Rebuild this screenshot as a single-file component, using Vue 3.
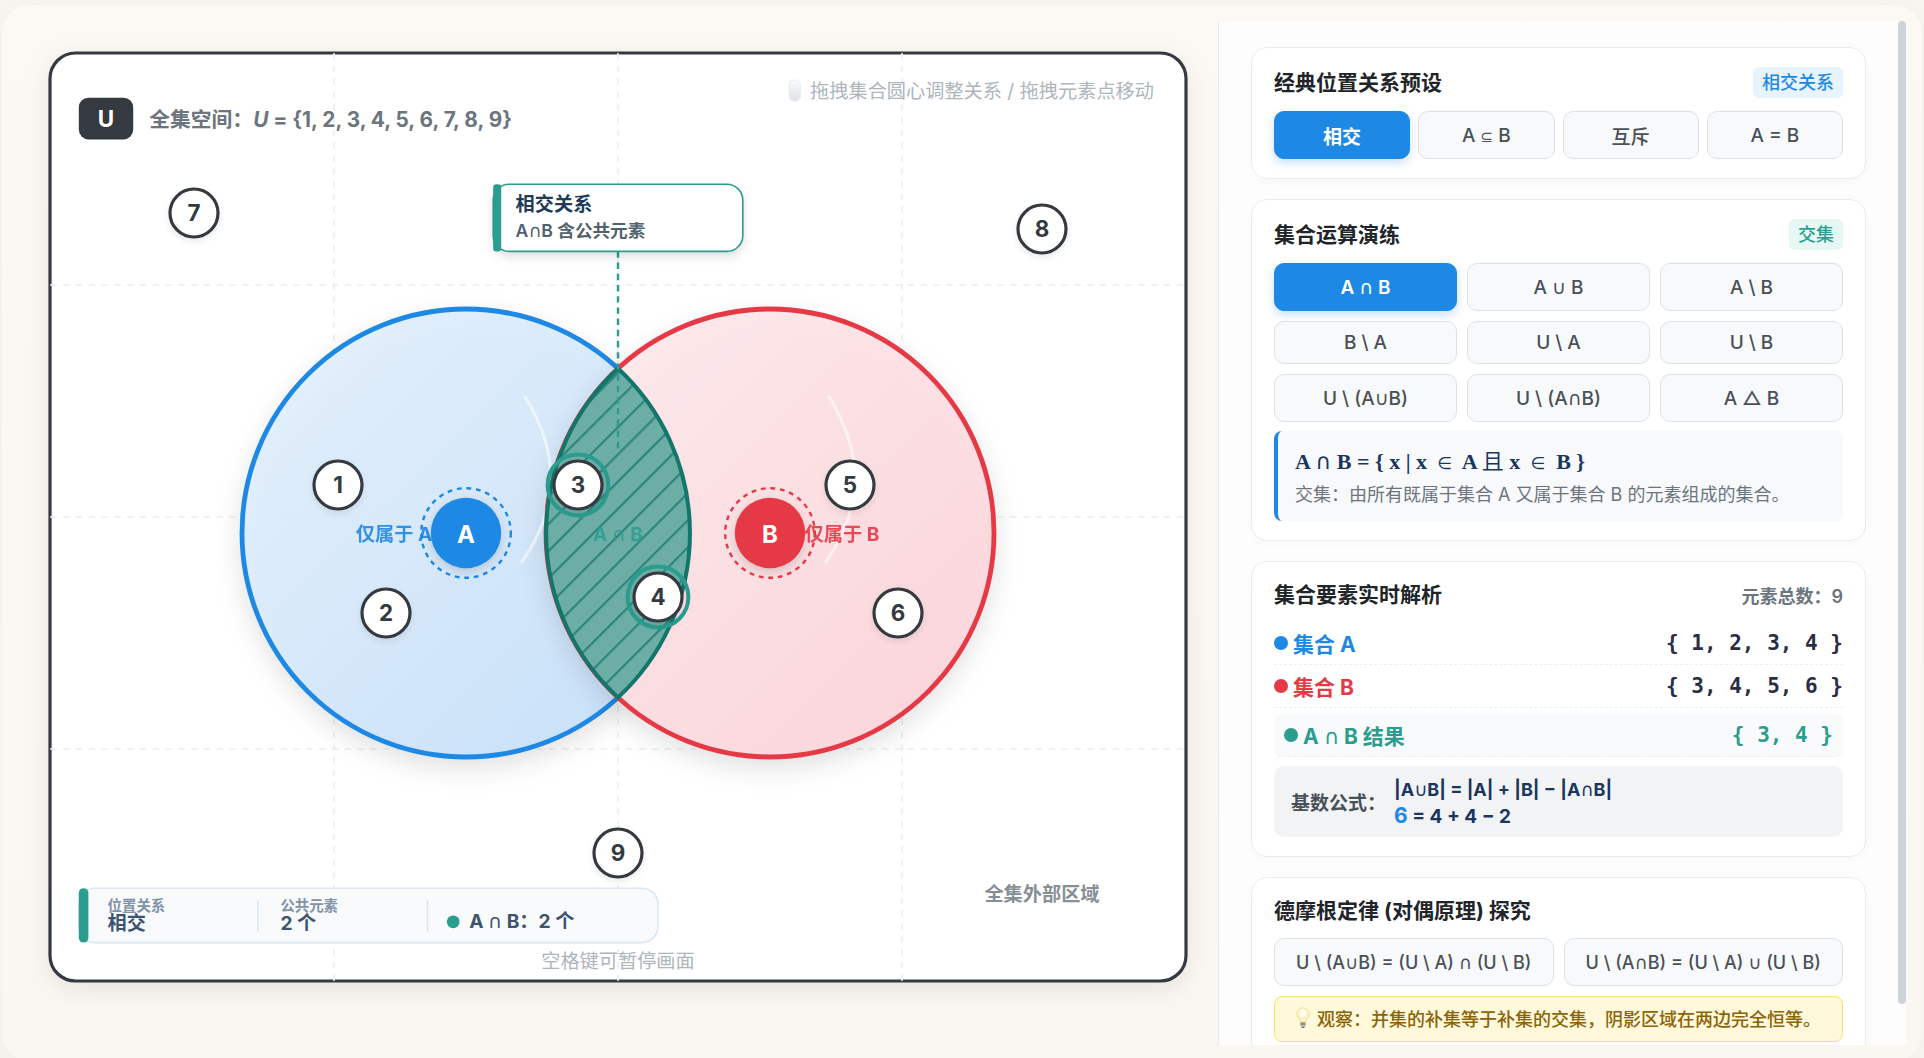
<script setup>
import { h, ref } from 'vue'

const gridX = [197.5, 375, 552.5]
const gridY = [165, 310, 455]

const sets = [
  { name: 'A', cx: 280, cy: 320, color: '#1e88e5', fill: 'url(#fillA)' },
  { name: 'B', cx: 470, cy: 320, color: '#e63946', fill: 'url(#fillB)' },
]

const elements = [
  { n: 1, x: 200, y: 290 },
  { n: 2, x: 230, y: 370 },
  { n: 3, x: 350, y: 290, hit: true },
  { n: 4, x: 400, y: 360, hit: true },
  { n: 5, x: 520, y: 290 },
  { n: 6, x: 550, y: 370 },
  { n: 7, x: 110, y: 120 },
  { n: 8, x: 640, y: 130 },
  { n: 9, x: 375, y: 520 },
]

const presets = ['相交', 'A ⊆ B', '互斥', 'A = B']
const preset = ref('相交')

const operations = [
  'A ∩ B', 'A ∪ B', 'A \\ B',
  'B \\ A', 'U \\ A', 'U \\ B',
  'U \\ (A∪B)', 'U \\ (A∩B)', 'A △ B',
]
const operation = ref('A ∩ B')

const laws = ['U \\ (A∪B) = (U \\ A) ∩ (U \\ B)', 'U \\ (A∩B) = (U \\ A) ∪ (U \\ B)']

const rows = [
  { label: '集合 A', value: '{ 1, 2, 3, 4 }', kind: 'set-a' },
  { label: '集合 B', value: '{ 3, 4, 5, 6 }', kind: 'set-b' },
  { label: 'A ∩ B 结果', value: '{ 3, 4 }', kind: 'result' },
]

// Set operators are drawn in a lighter symbol face than the letters around them.
const symbolClass = { '∩': 'sym', '∪': 'sym', '⊆': 'sym subset', '∈': 'sym member', '且': 'sym and' }
const Expr = ({ text, tag = 'span' }) =>
  h(tag, text.split(/([∩∪⊆∈且])/).map((part) =>
    symbolClass[part] ? h(tag, { class: symbolClass[part] }, part) : part))
Expr.props = ['text', 'tag']
</script>

<template>
  <div class="page">
    <main class="app">
      <section class="stage">
        <svg class="venn" viewBox="0 0 750 620">
          <defs>
            <linearGradient id="fillA" x1="0" y1="0" x2="1" y2="1">
              <stop offset="0" stop-color="#e5f1fd" />
              <stop offset="1" stop-color="#c3dffa" />
            </linearGradient>
            <linearGradient id="fillB" x1="0" y1="0" x2="1" y2="1">
              <stop offset="0" stop-color="#feebed" />
              <stop offset="1" stop-color="#fcd2d8" />
            </linearGradient>
            <linearGradient id="mouse" x1="0" y1="0" x2="0" y2="1">
              <stop offset="0" stop-color="#fbfbfc" />
              <stop offset="1" stop-color="#dfe2e7" />
            </linearGradient>
            <pattern id="hatch" width="12" height="12" patternUnits="userSpaceOnUse" patternTransform="rotate(45)">
              <rect width="1.4" height="12" fill="#14746a" fill-opacity="0.7" />
            </pattern>
          </defs>

          <rect class="universe" x="20" y="20" width="710" height="580" rx="16" />
          <g class="grid">
            <line v-for="x in gridX" :key="'x' + x" :x1="x" :x2="x" y1="20" y2="600" />
            <line v-for="y in gridY" :key="'y' + y" x1="20" x2="730" :y1="y" :y2="y" />
          </g>

          <rect x="38" y="48" width="34" height="26" rx="6" fill="#343a40" />
          <text class="t14 bold mid" x="55" y="66" fill="#fff">U</text>
          <text class="t13 bold" x="82" y="66" fill="#6c757d">全集空间：<tspan font-style="italic">U</tspan> = {1, 2, 3, 4, 5, 6, 7, 8, 9}</text>

          <rect x="482" y="37" width="7" height="13" rx="3" fill="url(#mouse)" stroke="#ebedf0" stroke-width="0.8" />
          <text class="t12 end" x="710" y="48" fill="#adb5bd">拖拽集合圆心调整关系 / 拖拽元素点移动</text>

          <circle
            v-for="s in sets" :key="s.name" class="set"
            :cx="s.cx" :cy="s.cy" r="140" :fill="s.fill" :stroke="s.color"
          />
          <g class="gloss">
            <path d="M317 235Q350 288 315 338" />
            <path d="M507 235Q540 288 505 338" />
          </g>

          <path d="M375 217.200A140 140 0 0 1 375 422.800A140 140 0 0 1 375 217.200Z" fill="#63aaa2" fill-opacity="0.94" />
          <path d="M375 217.200A140 140 0 0 1 375 422.800A140 140 0 0 1 375 217.200Z" fill="url(#hatch)" stroke="#12766a" stroke-width="2.500" />

          <line class="leader" x1="375" y1="144" x2="375" y2="268" />
          <text class="t12 bold mid" x="375" y="325" fill="#2a9d8f" opacity="0.85"><Expr tag="tspan" text="A ∩ B" /></text>
          <text class="t12 bold mid" x="235" y="325" fill="#1e88e5" opacity="0.9">仅属于 A</text>
          <text class="t12 bold mid" x="640" y="550" fill="#868e96">全集外部区域</text>

          <g v-for="s in sets" :key="'h' + s.name">
            <circle class="orbit" :cx="s.cx" :cy="s.cy" r="28" :stroke="s.color" />
            <circle class="handle" :cx="s.cx" :cy="s.cy" r="22" :fill="s.color" />
            <text class="t15 bold mid" :x="s.cx" :y="s.cy + 6" fill="#fff">{{ s.name }}</text>
          </g>
          <text class="t12 bold mid" x="515" y="325" fill="#e63946" opacity="0.9">仅属于 B</text>

          <g v-for="e in elements" :key="e.n">
            <circle v-if="e.hit" :cx="e.x" :cy="e.y" r="19" fill="none" stroke="#2a9d8f" stroke-width="2.5" />
            <circle class="element" :cx="e.x" :cy="e.y" r="15" />
            <text class="t14 bold mid" :x="e.x" :y="e.y + 5" fill="#343a40">{{ e.n }}</text>
          </g>

          <g>
            <rect class="callout" x="297" y="102" width="156" height="42" rx="10" />
            <rect x="297" y="102" width="5" height="42" rx="2" fill="#2a9d8f" />
            <text class="t12 bold" x="311" y="119" fill="#223a59">相交关系</text>
            <text class="t11 semi" x="311" y="135" fill="#52616e"><Expr tag="tspan" text="A∩B 含公共元素" /></text>
          </g>

          <g>
            <rect x="38" y="542" width="362" height="34" rx="10" fill="#f8fafc" stroke="#dbe7f5" />
            <rect x="38" y="542" width="6" height="34" rx="3" fill="#2a9d8f" />
            <path d="M150 549V569M256 549V569" stroke="#dbe7f5" />
            <text class="t9 semi" x="56" y="556" fill="#8292a8">位置关系</text>
            <text class="t12 bold" x="56" y="568" fill="#3d5470">相交</text>
            <text class="t9 semi" x="164" y="556" fill="#8292a8">公共元素</text>
            <text class="t12 bold" x="164" y="568" fill="#3d5470">2 个</text>
            <circle cx="272" cy="563" r="4" fill="#2a9d8f" />
            <text class="t12 bold" x="282" y="567" fill="#3d5470"><Expr tag="tspan" text="A ∩ B：2 个" /></text>
          </g>
          <text class="t12 mid" x="375" y="592" fill="#adb5bd">空格键可暂停画面</text>
        </svg>
      </section>

      <aside class="panel">
        <div class="cards">
          <section class="card">
            <header class="head badged">
              <h2>经典位置关系预设</h2>
              <span class="badge blue">相交关系</span>
            </header>
            <div class="presets">
              <button
                v-for="p in presets" :key="p" type="button" class="btn"
                :class="{ active: p === preset }" @click="preset = p"
              ><Expr :text="p" /></button>
            </div>
          </section>

          <section class="card">
            <header class="head badged">
              <h2>集合运算演练</h2>
              <span class="badge green">交集</span>
            </header>
            <div class="operations">
              <button
                v-for="o in operations" :key="o" type="button" class="btn"
                :class="{ active: o === operation }" @click="operation = o"
              ><Expr :text="o" /></button>
            </div>
            <div class="definition">
              <p class="math"><Expr text="A ∩ B = { x | x ∈ A 且 x ∈ B }" /></p>
              <p class="desc">交集：由所有既属于集合 A 又属于集合 B 的元素组成的集合。</p>
            </div>
          </section>

          <section class="card">
            <header class="head">
              <h2>集合要素实时解析</h2>
              <span class="total">元素总数：9</span>
            </header>
            <div v-for="r in rows" :key="r.label" class="row" :class="r.kind">
              <span class="name"><i class="dot"></i><Expr :text="r.label" /></span>
              <span class="value">{{ r.value }}</span>
            </div>
            <div class="cardinality">
              <span class="caption">基数公式：</span>
              <div class="equation">
                <p class="identity"><Expr text="|A∪B| = |A| + |B| − |A∩B|" /></p>
                <p><b>6</b> = 4 + 4 − 2</p>
              </div>
            </div>
          </section>

          <section class="card">
            <header class="head">
              <h2>德摩根定律 (对偶原理) 探究</h2>
            </header>
            <div class="laws">
              <button v-for="l in laws" :key="l" type="button" class="btn"><Expr :text="l" /></button>
            </div>
            <p class="note">
              <svg class="bulb" viewBox="0 0 14 22">
                <path d="M7 1C3.500 1 1 3.600 1 6.900C1 10.200 4 11.500 4.400 15H9.600C10 11.500 13 10.200 13 6.900C13 3.600 10.500 1 7 1Z" fill="#fff3c4" stroke="#f4dc9a" />
                <ellipse cx="7" cy="6" rx="3" ry="4" fill="#fffdf4" />
                <path d="M4.500 15H9.500V18.500L8.500 20H5.500L4.500 18.500Z" fill="#b9b3a4" />
                <path d="M4.500 17H9.500M5.500 20.500H8.500" stroke="#6f6a60" />
              </svg>
              <span>观察：并集的补集等于补集的交集，阴影区域在两边完全恒等。</span>
            </p>
          </section>
        </div>
        <div class="scrollbar"></div>
      </aside>
    </main>
  </div>
</template>

<style>
body {
  background: #f8f5f0;
  overflow: hidden;
}
</style>

<style scoped>
* {
  box-sizing: border-box;
}

.page {
  height: 100vh;
  padding: 5px 2px 0;
  overflow: hidden;
  font-family: Inter, "Noto Sans CJK SC", sans-serif;
  color: #212529;
}

:deep(.sym) {
  font-family: "DejaVu Sans", sans-serif;
  font-weight: 400;
  line-height: 1;
}

:deep(.subset) {
  font-size: 15px;
}

:deep(.member) {
  padding: 0 5px;
  font-size: 17px;
}

:deep(.and) {
  font-family: "Noto Sans CJK SC", sans-serif;
  font-weight: 400;
}

.app {
  display: grid;
  grid-template-columns: minmax(0, 75fr) minmax(0, 43fr);
  height: calc(100vh - 2px);
  padding: 16px;
  border-radius: 28px;
  background: linear-gradient(#fcf9f4, #faf7f2);
  box-shadow: 0 8px 32px rgba(0, 0, 0, 0.03);
}

.venn {
  display: block;
  width: 100%;
  height: auto;
}

.venn text {
  white-space: pre;
}

.t9 { font-size: 9px; }
.t11 { font-size: 11px; }
.t12 { font-size: 12px; }
.t13 { font-size: 13px; }
.t14 { font-size: 14px; }
.t15 { font-size: 15px; }
.semi { font-weight: 600; }
.bold { font-weight: 700; }
.mid { text-anchor: middle; }
.end { text-anchor: end; }

.universe {
  fill: #fff;
  stroke: #343a40;
  stroke-width: 2;
  filter: drop-shadow(0 4px 8px rgba(0, 0, 0, 0.08));
}

.grid line {
  stroke: #ecedef;
  stroke-width: 1;
  stroke-dasharray: 4 4;
}

.set {
  fill-opacity: 0.92;
  stroke-width: 3;
  filter: drop-shadow(0 6px 8px rgba(0, 0, 0, 0.12));
}

.gloss path {
  fill: none;
  stroke: #fff;
  stroke-opacity: 0.55;
  stroke-width: 2;
  stroke-linecap: round;
}

.leader {
  stroke: #2a9d8f;
  stroke-width: 1.5;
  stroke-dasharray: 4 3;
}

.orbit {
  fill: none;
  stroke-width: 1.5;
  stroke-dasharray: 3 3;
}

.handle {
  filter: drop-shadow(0 2px 3px rgba(0, 0, 0, 0.15));
}

.element {
  fill: #fff;
  stroke: #343a40;
  stroke-width: 2;
  filter: drop-shadow(0 2px 2px rgba(0, 0, 0, 0.08));
}

.callout {
  fill: #fff;
  stroke: #2a9d8f;
  stroke-width: 1;
  filter: drop-shadow(0 3px 3px rgba(0, 0, 0, 0.12));
}

.panel {
  display: flex;
  min-height: 0;
  overflow: hidden;
  border-left: 1px solid #e6e8f0;
  background: #fdfdfe;
}

.cards {
  flex: 1;
  min-width: 0;
  display: flex;
  flex-direction: column;
  gap: 20px;
  padding: 26px 32px;
}

.scrollbar {
  flex: none;
  width: 8px;
  height: 96%;
  border-radius: 4px;
  background: #ced4dc;
}

.card {
  flex: none;
  padding: 19px 22px;
  border: 1px solid #ebecef;
  border-radius: 16px;
  background: #fff;
  box-shadow: 0 4px 12px rgba(0, 0, 0, 0.02);
}

.head {
  display: flex;
  align-items: center;
  justify-content: space-between;
  height: 28px;
  margin-bottom: 13px;
}

.head.badged {
  height: 31px;
}

h2 {
  margin: 0;
  font-size: 21px;
  font-weight: 700;
  line-height: 28px;
}

.badge {
  padding: 0 9px;
  border-radius: 6px;
  font-size: 18px;
  font-weight: 500;
  line-height: 31px;
}

.blue {
  color: #1e88e5;
  background: #e8f4fd;
}

.green {
  color: #2a9d8f;
  background: #e6f7f4;
}

.presets {
  display: grid;
  grid-template-columns: repeat(4, minmax(0, 1fr));
  gap: 8px;
}

.operations {
  display: grid;
  grid-template-columns: repeat(3, minmax(0, 1fr));
  grid-template-rows: 48px 43px 48px;
  gap: 10px;
}

.laws {
  display: grid;
  grid-template-columns: repeat(2, minmax(0, 1fr));
  gap: 10px;
}

.btn {
  min-height: 43px;
  padding: 0;
  border: 1px solid #dee2e6;
  border-radius: 10px;
  background: #f8f9fb;
  color: #495057;
  font-family: inherit;
  font-size: 19px;
  font-weight: 500;
  white-space: nowrap;
  cursor: pointer;
}

.presets .btn,
.laws .btn {
  height: 48px;
}

.laws .btn {
  font-size: 18px;
}

.btn.active {
  border-color: #1e88e5;
  background: #1e88e5;
  color: #fff;
  font-weight: 600;
  box-shadow: 0 4px 10px rgba(30, 136, 229, 0.25);
}

p {
  margin: 0;
}

.definition {
  margin-top: 9px;
  padding: 14px 17px 11px;
  border-left: 4px solid #1e88e5;
  border-radius: 8px;
  background: #f8f9fb;
}

.math {
  font-family: "Liberation Serif", "Noto Sans CJK SC", serif;
  font-size: 22px;
  font-weight: 700;
  line-height: 34px;
  color: #1a365d;
}

.desc {
  font-size: 18px;
  line-height: 31px;
  color: #6c757d;
}

.total {
  font-size: 18px;
  font-weight: 600;
  color: #6c757d;
}

.row {
  display: flex;
  align-items: center;
  justify-content: space-between;
  height: 43px;
  border-bottom: 1px dashed #eceef1;
  font-size: 21px;
  font-weight: 700;
}

.name {
  display: flex;
  align-items: center;
  gap: 5px;
}

.dot {
  width: 14px;
  height: 14px;
  border-radius: 50%;
  background: currentColor;
}

.value {
  font-family: "DejaVu Sans Mono", monospace;
  font-size: 21px;
  font-weight: 700;
  color: #2b2d42;
}

.set-a .name {
  color: #1e88e5;
}

.set-b .name {
  color: #e63946;
}

.result {
  margin-top: 6px;
  padding: 0 10px;
  border-radius: 8px;
  background: #f8fafb;
}

.result .name,
.result .value {
  color: #2a9d8f;
}

.cardinality {
  display: flex;
  align-items: center;
  gap: 8px;
  height: 71px;
  margin-top: 9px;
  padding: 0 17px;
  border-radius: 10px;
  background: #f1f3f5;
}

.caption {
  font-size: 19px;
  font-weight: 600;
  color: #495057;
}

.equation {
  padding-top: 2px;
  font-size: 19px;
  font-weight: 700;
  line-height: 27px;
  color: #1a365d;
}

.identity {
  font-size: 18px;
}

.equation b {
  font-size: 21px;
  font-weight: 700;
  line-height: 1;
  color: #1e88e5;
}

.note {
  display: flex;
  align-items: center;
  gap: 7px;
  height: 46px;
  margin-top: 10px;
  padding: 0 21px 2px;
  border: 1px solid #ffe066;
  border-radius: 8px;
  background: #fff8db;
  color: #8a6508;
  font-size: 18px;
  font-weight: 500;
  white-space: nowrap;
}

.bulb {
  flex: none;
  width: 14px;
  height: 22px;
  fill: none;
}
</style>
